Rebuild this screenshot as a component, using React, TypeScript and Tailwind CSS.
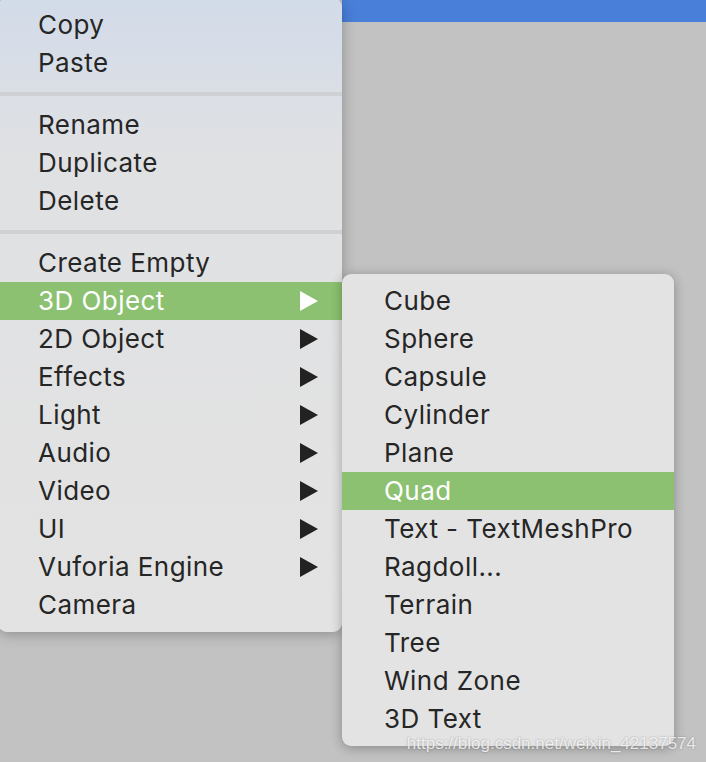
import React from "react";

const font = { fontFamily: 'Inter, "Noto Sans", "Liberation Sans", sans-serif' };

function Arrow({ white }: { white?: boolean }) {
  return (
    <svg width="18" height="20" viewBox="0 0 18 20" className="shrink-0">
      <polygon points="0,0 18,10 0,20" fill={white ? "#ffffff" : "#222222"} />
    </svg>
  );
}

type Item = { label: string; sub?: boolean; active?: boolean };

function Row({ item, padL }: { item: Item; padL: string }) {
  return (
    <div
      className={`flex h-[38px] items-center justify-between ${padL} pr-[24px] ${
        item.active ? "bg-[#8bc170] text-white" : "text-[#262626]"
      }`}
    >
      <span className="text-[26px] leading-none tracking-[0.45px]">{item.label}</span>
      {item.sub ? <Arrow white={item.active} /> : null}
    </div>
  );
}

function Sep() {
  return (
    <div className="py-[10px]">
      <div className="h-[4px] bg-[#cfd0d3]" />
    </div>
  );
}

export default function App() {
  const g1: Item[] = [{ label: "Copy" }, { label: "Paste" }];
  const g2: Item[] = [{ label: "Rename" }, { label: "Duplicate" }, { label: "Delete" }];
  const g3: Item[] = [
    { label: "Create Empty" },
    { label: "3D Object", sub: true, active: true },
    { label: "2D Object", sub: true },
    { label: "Effects", sub: true },
    { label: "Light", sub: true },
    { label: "Audio", sub: true },
    { label: "Video", sub: true },
    { label: "UI", sub: true },
    { label: "Vuforia Engine", sub: true },
    { label: "Camera" },
  ];
  const sub: Item[] = [
    { label: "Cube" },
    { label: "Sphere" },
    { label: "Capsule" },
    { label: "Cylinder" },
    { label: "Plane" },
    { label: "Quad", active: true },
    { label: "Text - TextMeshPro" },
    { label: "Ragdoll..." },
    { label: "Terrain" },
    { label: "Tree" },
    { label: "Wind Zone" },
    { label: "3D Text" },
  ];

  return (
    <div className="relative h-[762px] w-[706px] overflow-hidden bg-[#c2c2c2]" style={font}>
      <div className="flex">
        <div className="relative z-10 -ml-[2px] -mt-[2px] w-[344px] rounded-[9px] bg-gradient-to-b from-[#d2dbe9] via-[#e0e1e3] via-25% to-[#e3e3e3] pb-[8px] pt-[8px] shadow-[0_2px_14px_rgba(0,0,0,0.28)]">
          {g1.map((i) => (
            <Row key={i.label} item={i} padL="pl-[40px]" />
          ))}
          <Sep />
          {g2.map((i) => (
            <Row key={i.label} item={i} padL="pl-[40px]" />
          ))}
          <Sep />
          {g3.map((i) => (
            <Row key={i.label} item={i} padL="pl-[40px]" />
          ))}
        </div>
        <div className="flex-1">
          <div className="h-[22px] bg-[#4a7fd9]" />
        </div>
      </div>

      <div className="absolute left-[342px] top-[274px] z-20 w-[332px] rounded-[9px] bg-[#e3e3e3] py-[8px] shadow-[0_2px_12px_rgba(0,0,0,0.3)]">
        {sub.map((i) => (
          <Row key={i.label} item={i} padL="pl-[42px]" />
        ))}
      </div>

      <div
        className="absolute bottom-[10px] right-[10px] z-30 text-[17px] leading-none text-white/80"
        style={{ fontFamily: '"Liberation Sans", sans-serif', textShadow: "0 0 2px rgba(0,0,0,0.35)" }}
      >
        https://blog.csdn.net/weixin_42137574
      </div>
    </div>
  );
}
